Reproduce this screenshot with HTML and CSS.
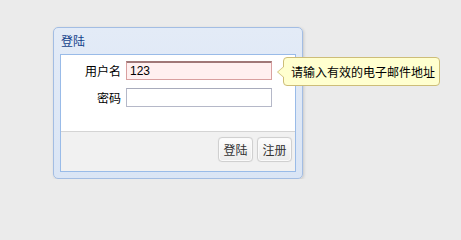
FILE: index.html
```html
<!DOCTYPE html>
<html>
<head>
<meta charset="utf-8">
<link rel="stylesheet" href="styles.css">
</head>
<body>
<div class="window">
  <div class="header">登陆</div>
  <div class="inner">
    <div class="form">
      <div class="row">
        <label class="label">用户名</label>
        <input class="field invalid" type="text" value="123">
      </div>
      <div class="row">
        <label class="label">密码</label>
        <input class="field" type="password" value="">
      </div>
    </div>
    <div class="footer">
      <button class="btn">登陆</button>
      <button class="btn">注册</button>
    </div>
  </div>
</div>
<div class="tip">请输入有效的电子邮件地址</div>
</body>
</html>
```
FILE: styles.css
```css
html, body {
  margin: 0;
  padding: 0;
  background: #ebebeb;
  font-family: "Noto Sans CJK SC", "Liberation Sans", sans-serif;
  font-size: 12px;
}
body {
  padding: 27px 0 0 53px;
}
.window {
  width: 250px;
  box-sizing: border-box;
  border: 1px solid #a3bde3;
  border-radius: 5px;
  background: linear-gradient(#e3ebf7, #dae5f5);
  padding: 0 6px 6px 6px;
  box-shadow: 1px 1px 3px rgba(0,0,0,0.15);
}
.header {
  height: 26px;
  line-height: 26px;
  color: #15428b;
  padding-left: 1px;
}
.inner {
  border: 1px solid #99bbe8;
  background: #fff;
}
.form {
  height: 76px;
  padding-top: 6px;
  box-sizing: border-box;
}
.row {
  display: flex;
  align-items: center;
  height: 19px;
  margin-bottom: 8px;
}
.label {
  width: 60px;
  text-align: right;
  margin-right: 5px;
  color: #000;
}
.field {
  width: 146px;
  height: 19px;
  box-sizing: border-box;
  margin: 0;
  padding: 0 3px;
  border: 1px solid #b5b8c8;
  border-top-color: #a8abbb;
  background: #fff;
  font-family: "Liberation Sans", sans-serif;
  font-size: 12px;
  outline: none;
}
.field.invalid {
  border: 1px solid #d9a0a0;
  border-top: 2px solid #a07878;
  background: #fff0f0;
}
.footer {
  height: 40px;
  box-sizing: border-box;
  background: #f1f1f1;
  border-top: 1px solid #d4d4d4;
  display: flex;
  justify-content: flex-end;
  align-items: flex-start;
  padding: 5px 3px 0 0;
  gap: 4px;
}
.btn {
  width: 35px;
  height: 25px;
  margin: 0;
  padding: 0;
  border: 1px solid #d0d0d0;
  border-radius: 4px;
  background: linear-gradient(#fdfdfd, #ebebeb);
  box-shadow: inset 0 0 0 1px #fafafa, 0 0 1px rgba(0,0,0,0.1);
  color: #333;
  font-family: "Noto Sans CJK SC", sans-serif;
  font-size: 12px;
}
.tip {
  position: absolute;
  left: 283px;
  top: 57px;
  width: 157px;
  height: 29px;
  box-sizing: border-box;
  background: #ffffcf;
  border: 1px solid #cdbd78;
  border-radius: 4px;
  line-height: 27px;
  padding-left: 7px;
  color: #000;
  white-space: nowrap;
}
.tip::before {
  content: "";
  position: absolute;
  left: -7px;
  top: 8px;
  border-style: solid;
  border-width: 6px 7px 6px 0;
  border-color: transparent #cdbd78 transparent transparent;
}
.tip::after {
  content: "";
  position: absolute;
  left: -6px;
  top: 8px;
  border-style: solid;
  border-width: 6px 7px 6px 0;
  border-color: transparent #ffffcf transparent transparent;
}
```
